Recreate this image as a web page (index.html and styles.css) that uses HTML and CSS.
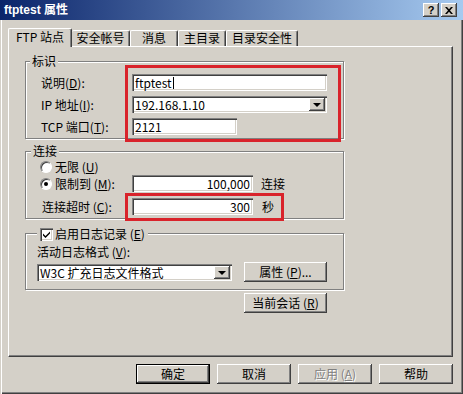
FILE: index.html
```html
<!DOCTYPE html>
<html lang="zh-CN">
<head>
    <meta charset="UTF-8">
    <title>ftptest 属性</title>
    <link rel="stylesheet" href="styles.css">
</head>
<body>
    <div class="window">
        <div class="titlebar">
            <span class="title">ftptest 属性</span>
            <div class="caption-btns">
                <span class="cbtn help">?</span>
                <span class="cbtn">
                    <svg width="8" height="7" viewBox="0 0 8 7"><path d="M0 0h2l2 2.2L6 0h2L5 3.5 8 7H6L4 4.8 2 7H0l3-3.5z" fill="#000"/></svg>
                </span>
            </div>
        </div>

        <div class="tabs">
            <div class="tab active">FTP 站点</div>
            <div class="tab t2">安全帐号</div>
            <div class="tab t3">消息</div>
            <div class="tab t3">主目录</div>
            <div class="tab t5">目录安全性</div>
        </div>

        <div class="panel">
            <!-- 标识 -->
            <div class="group">
                <div class="group-title">标识</div>
                <div class="fields">
                    <div class="row">
                        <span class="lbl">说明(<u>D</u>):</span>
                        <div class="field w-long">ftptest<span class="caret"></span></div>
                    </div>
                    <div class="row">
                        <span class="lbl">IP 地址(<u>I</u>):</span>
                        <div class="field combo w-long">
                            192.168.1.10
                            <span class="drop"><i class="arrow"></i></span>
                        </div>
                    </div>
                    <div class="row">
                        <span class="lbl">TCP 端口(<u>T</u>):</span>
                        <div class="field w-short">2121</div>
                    </div>
                </div>
            </div>

            <!-- 连接 -->
            <div class="group conn">
                <div class="group-title t-conn">连接</div>
                <div class="conn-body">
                    <div class="row">
                        <span class="radio"></span>
                        <span class="radio-text">无限 (<u>U</u>)</span>
                    </div>
                    <div class="row">
                        <span class="radio on"></span>
                        <span class="radio-text wide">限制到 (<u>M</u>):</span>
                        <div class="field num">100,000</div>
                        <span class="unit">连接</span>
                    </div>
                    <div class="row timeout">
                        <span class="lbl-timeout">连接超时 (<u>C</u>):</span>
                        <div class="field num">300</div>
                        <span class="unit sec">秒</span>
                    </div>
                </div>
            </div>

            <!-- 日志 -->
            <div class="group log">
                <div class="log-head">
                    <div class="log-title">
                        <span class="check">
                            <svg width="9" height="9" viewBox="0 0 9 9"><path d="M1 3.5l2.5 2.5L8 1.5v2L3.5 8 1 5.5z" fill="#000"/></svg>
                        </span>
                        <span>启用日志记录 (<u>E</u>)</span>
                    </div>
                </div>
                <div class="log-body">
                    <div class="log-left">
                        <div>活动日志格式 (<u>V</u>):</div>
                        <div class="field combo w-long log-combo">
                            W3C 扩充日志文件格式
                            <span class="drop"><i class="arrow"></i></span>
                        </div>
                    </div>
                    <div class="btn small">属性 (<u>P</u>)...</div>
                </div>
            </div>

            <div class="btn small sessions">当前会话 (<u>R</u>)</div>
        </div>

        <div class="footer">
            <div class="btn wide-btn default">确定</div>
            <div class="btn wide-btn">取消</div>
            <div class="btn wide-btn disabled">应用 (<u>A</u>)</div>
            <div class="btn wide-btn">帮助</div>
        </div>

        <!-- 红色标注框 -->
        <div class="mark mark-id"></div>
        <div class="mark mark-timeout"></div>
    </div>
</body>
</html>
```

FILE: styles.css
```css
body {
    margin: 0;
    background-color: #D4D0C8;
    font-family: "Noto Sans CJK SC", sans-serif;
    font-size: 12px;
    line-height: 14px;
    color: #000;
}
u {
    text-decoration: underline;
    text-underline-offset: 1px;
}
.window {
    position: relative;
    width: 463px;
    height: 394px;
    box-sizing: border-box;
    overflow: hidden;
    box-shadow: inset 1px 1px 0 #D4D0C8, inset 2px 2px 0 #fff,
                inset -1px -1px 0 #404040, inset -2px -2px 0 #808080;
}

/* title bar */
.titlebar {
    display: flex;
    align-items: center;
    height: 20px;
    padding-left: 4px;
    background: linear-gradient(to right, #0A246A, #A6CAF0);
    color: #fff;
}
.title {
    font-family: "Liberation Sans", "Noto Sans CJK SC", sans-serif;
    font-weight: bold;
    font-size: 12px;
}
.caption-btns {
    display: flex;
    gap: 2px;
    margin-left: auto;
    margin-right: 6px;
}
.cbtn {
    display: flex;
    align-items: center;
    justify-content: center;
    width: 16px;
    height: 14px;
    background-color: #D4D0C8;
    box-shadow: inset -1px -1px 0 #404040, inset 1px 1px 0 #fff, inset -2px -2px 0 #808080;
    color: #000;
}
.cbtn.help {
    font-family: "Liberation Sans", sans-serif;
    font-weight: bold;
    font-size: 11px;
}

/* tabs */
.tabs {
    display: flex;
    align-items: flex-end;
    height: 18px;
    margin: 8px 0 0 8px;
}
.tab {
    box-sizing: border-box;
    height: 16px;
    width: 48px;
    border-top: 1px solid #fff;
    border-left: 1px solid #fff;
    border-right: 1px solid #404040;
    border-radius: 2px 2px 0 0;
    box-shadow: inset -1px 0 0 #808080;
    text-align: center;
    line-height: 14px;
}
.tab.active {
    position: relative;
    z-index: 1;
    width: 64px;
    height: 19px;
    margin-bottom: -1px;
    padding-top: 1px;
    background-color: #D4D0C8;
}
.tab.t2 { width: 58px; border-left: none; }
.tab.t5 { width: 72px; }

/* panel */
.panel {
    box-sizing: border-box;
    width: 445px;
    height: 311px;
    margin-left: 8px;
    padding: 14px 0 0 16px;
    border-top: 1px solid #fff;
    border-left: 1px solid #fff;
    border-right: 1px solid #404040;
    border-bottom: 1px solid #404040;
    box-shadow: inset -1px -1px 0 #808080;
}
.group {
    box-sizing: border-box;
    width: 319px;
    border: 1px solid #808080;
    box-shadow: inset 1px 1px 0 #fff, 1px 1px 0 #fff;
}
.group-title {
    width: fit-content;
    margin: -8px 0 0 4px;
    padding: 0 2px;
    background-color: #D4D0C8;
    line-height: 14px;
}
.fields {
    display: flex;
    flex-direction: column;
    gap: 5px;
    padding: 6px 0 3px 15px;
}
.row {
    display: flex;
    align-items: center;
    height: 17px;
}
.lbl {
    width: 91px;
}

/* inputs */
.field {
    box-sizing: border-box;
    display: flex;
    align-items: center;
    height: 17px;
    padding: 0 3px;
    background-color: #fff;
    box-shadow: inset 1px 1px 0 #808080, inset 2px 2px 0 #404040,
                inset -1px -1px 0 #fff, inset -2px -2px 0 #D4D0C8;
    white-space: nowrap;
}
.w-long { width: 195px; }
.w-short { width: 105px; }
.caret {
    display: inline-block;
    width: 0;
    height: 12px;
    margin-left: 1px;
    border-left: 1px solid #000;
}
.field.combo {
    padding-right: 2px;
}
.drop {
    display: flex;
    align-items: center;
    justify-content: center;
    width: 16px;
    height: 13px;
    margin-left: auto;
    background-color: #D4D0C8;
    box-shadow: inset -1px -1px 0 #404040, inset 1px 1px 0 #fff, inset -2px -2px 0 #808080;
}
.arrow {
    width: 0;
    height: 0;
    border-left: 4px solid transparent;
    border-right: 4px solid transparent;
    border-top: 4px solid #000;
}

/* 连接 */
.conn { margin-top: 12px; }
.t-conn { margin-left: 5px; }
.conn-body {
    padding: 0 0 3px 14px;
}
.radio {
    position: relative;
    box-sizing: border-box;
    width: 12px;
    height: 12px;
    border-radius: 50%;
    background-color: #fff;
    border: 1px solid;
    border-color: #808080 #fff #fff #808080;
    box-shadow: inset 1px 1px 0 #404040;
}
.radio.on::after {
    content: "";
    position: absolute;
    left: 3px;
    top: 3px;
    width: 4px;
    height: 4px;
    border-radius: 50%;
    background-color: #000;
}
.radio-text { margin-left: 3px; }
.radio-text.wide { width: 77px; }
.row.timeout {
    margin-top: 6px;
    padding-left: 2px;
}
.lbl-timeout { width: 90px; }
.field.num {
    width: 121px;
    justify-content: flex-end;
}
.unit { margin-left: 8px; }
.unit.sec { margin-left: 9px; }

/* 日志 */
.log { margin-top: 14px; }
.log-head {
    display: flex;
    margin-top: -7px;
    padding-left: 11px;
}
.log-title {
    display: flex;
    align-items: center;
    gap: 2px;
    padding: 0 3px;
    line-height: 14px;
    background-color: #D4D0C8;
}
.check {
    box-sizing: border-box;
    display: flex;
    align-items: center;
    justify-content: center;
    width: 13px;
    height: 13px;
    background-color: #fff;
    box-shadow: inset 1px 1px 0 #808080, inset 2px 2px 0 #404040,
                inset -1px -1px 0 #fff, inset -2px -2px 0 #D4D0C8;
}
.log-body {
    display: flex;
    align-items: flex-end;
    gap: 12px;
    padding: 4px 0 7px 11px;
}
.log-combo {
    margin-top: 5px;
    margin-bottom: 1px;
}

/* buttons */
.btn {
    box-sizing: border-box;
    display: flex;
    align-items: center;
    justify-content: center;
    height: 20px;
    background-color: #D4D0C8;
    box-shadow: inset -1px -1px 0 #404040, inset 1px 1px 0 #fff, inset -2px -2px 0 #808080;
}
.btn.small { width: 83px; }
.btn.sessions { margin: 3px 0 0 219px; }
.btn.wide-btn { width: 74px; }
.btn.default { border: 1px solid #000; }
.btn.disabled {
    color: #808080;
    text-shadow: 1px 1px 0 #fff;
}
.footer {
    display: flex;
    justify-content: flex-end;
    gap: 7px;
    margin-top: 7px;
    padding-right: 10px;
}

/* 红色标注 */
.mark {
    position: absolute;
    box-sizing: border-box;
    border: 3px solid #D9232B;
}
.mark-id {
    left: 125px;
    top: 65px;
    width: 216px;
    height: 77px;
}
.mark-timeout {
    left: 125px;
    top: 193px;
    width: 159px;
    height: 28px;
}
```
